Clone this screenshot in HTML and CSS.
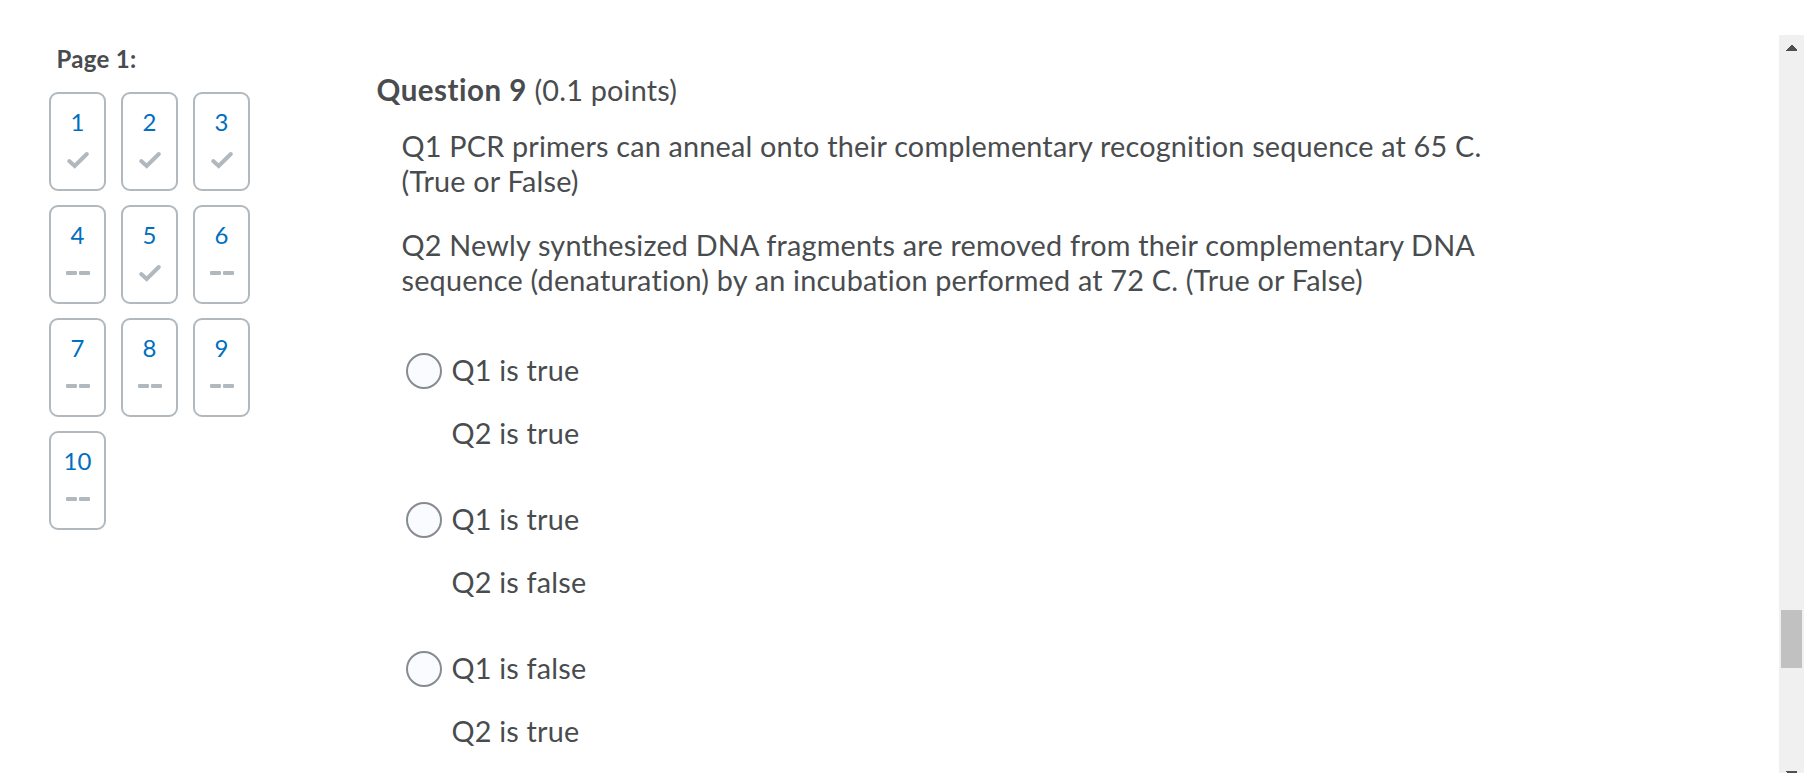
FILE: index.html
```
<!DOCTYPE html>
<html lang="en">
<head>
  <meta charset="UTF-8">
  <meta name="viewport" content="width=device-width, initial-scale=1.0">
  <title>Quiz - Question 9</title>
  <link rel="stylesheet" href="styles.css">
</head>
<body>
  <svg class="defs" width="0" height="0">
    <symbol id="check" viewBox="0 0 24 18">
      <path d="M3.2 10 L8.7 15 L20.8 3" fill="none" stroke="currentColor" stroke-width="4" stroke-linecap="round" stroke-linejoin="miter"/>
    </symbol>
    <symbol id="dashes" viewBox="0 0 24 18">
      <rect x="0" y="7" width="11" height="4" rx="1"/>
      <rect x="13" y="7" width="11" height="4" rx="1"/>
    </symbol>
  </svg>

  <div class="quiz">
    <nav class="sidebar">
      <h2 class="page-title">Page 1:</h2>
      <div class="question-grid">
        <a class="card"><span>1</span><svg class="icon"><use href="#check"/></svg></a>
        <a class="card"><span>2</span><svg class="icon"><use href="#check"/></svg></a>
        <a class="card"><span>3</span><svg class="icon"><use href="#check"/></svg></a>
        <a class="card"><span>4</span><svg class="icon"><use href="#dashes"/></svg></a>
        <a class="card"><span>5</span><svg class="icon"><use href="#check"/></svg></a>
        <a class="card"><span>6</span><svg class="icon"><use href="#dashes"/></svg></a>
        <a class="card"><span>7</span><svg class="icon"><use href="#dashes"/></svg></a>
        <a class="card"><span>8</span><svg class="icon"><use href="#dashes"/></svg></a>
        <a class="card"><span>9</span><svg class="icon"><use href="#dashes"/></svg></a>
        <a class="card"><span>10</span><svg class="icon"><use href="#dashes"/></svg></a>
      </div>
    </nav>

    <main class="content">
      <h1 class="question-title"><strong>Question 9</strong> (0.1 points)</h1>
      <div class="question-text">
        <p>Q1 PCR primers can anneal onto their complementary recognition sequence at 65 C.<br>(True or False)</p>
        <p>Q2 Newly synthesized DNA fragments are removed from their complementary DNA<br>sequence (denaturation) by an incubation performed at 72 C. (True or False)</p>
      </div>

      <div class="options">
        <label class="option">
          <input type="radio" name="answer" class="radio">
          <span class="answer"><span>Q1 is true</span><span>Q2 is true</span></span>
        </label>
        <label class="option">
          <input type="radio" name="answer" class="radio">
          <span class="answer"><span>Q1 is true</span><span>Q2 is false</span></span>
        </label>
        <label class="option">
          <input type="radio" name="answer" class="radio">
          <span class="answer"><span>Q1 is false</span><span>Q2 is true</span></span>
        </label>
      </div>
    </main>

    <div class="scrollbar">
      <svg class="arrow" viewBox="0 0 11 6" shape-rendering="crispEdges"><path d="M0 6V5L5 0H6L11 5V6Z"/></svg>
      <div class="thumb"></div>
      <svg class="arrow" viewBox="0 0 11 6" shape-rendering="crispEdges"><path d="M0 0V1L5 6H6L11 1V0Z"/></svg>
    </div>
  </div>
</body>
</html>
```
FILE: styles.css
```
* {
  box-sizing: border-box;
}
body {
  margin: 0;
  height: 773px;
  overflow: hidden;
  font-family: Lato, sans-serif;
  font-size: 28.8px;
  line-height: 35px;
  letter-spacing: 0.2px;
  color: #494c4e;
  background-color: #fff;
}
.defs {
  display: block;
}
.quiz {
  display: flex;
  height: 773px;
  overflow: hidden;
}

/* question navigation */
.sidebar {
  width: 376.5px;
  flex-shrink: 0;
  padding: 43px 0 0 49px;
}
.page-title {
  margin: 0 0 17px 7.5px;
  font-size: 24px;
  line-height: 32px;
  letter-spacing: 0.3px;
}
.question-grid {
  display: grid;
  grid-template-columns: repeat(3, 57px);
  gap: 14px 15px;
}
.card {
  display: flex;
  flex-direction: column;
  align-items: center;
  height: 99px;
  padding-top: 11px;
  border: 2px solid #b1b9be;
  border-radius: 9px;
  font-size: 24px;
  line-height: 34px;
  color: #006fbf;
}
.icon {
  width: 24px;
  height: 18px;
  margin-top: 12px;
  color: #b1b9be;
  fill: #b1b9be;
}

/* question */
.content {
  flex: 1;
  padding-top: 73px;
}
.question-title {
  margin: 0;
  font-size: 28.8px;
  font-weight: normal;
}
.question-title strong {
  font-size: 29.5px;
  line-height: 1;
  letter-spacing: 0.5px;
}
.question-text {
  padding: 21px 0 0 25px;
}
.question-text p {
  margin: 0 0 29px;
}
.options {
  padding: 26px 0 0 29.5px;
}
.option {
  display: flex;
  margin-bottom: 51px;
}
.radio {
  appearance: none;
  flex-shrink: 0;
  width: 36px;
  height: 36px;
  margin: 0 9.5px 0 0;
  border: 2px solid #868c8f;
  border-radius: 50%;
  background-color: #f9fbff;
}
.answer {
  display: flex;
  flex-direction: column;
  gap: 28px;
}

/* scrollbar */
.scrollbar {
  display: flex;
  flex-direction: column;
  align-items: center;
  flex-shrink: 0;
  width: 25px;
  height: 752px;
  margin: 35px 3px 0 0;
  padding-top: 10px;
  background-color: #f0f0f0;
}
.arrow {
  width: 11px;
  height: 6px;
  flex-shrink: 0;
  fill: #505050;
}
.thumb {
  width: 21px;
  height: 58px;
  flex-shrink: 0;
  margin: 559px 0 103px;
  background-color: #c1c1c1;
}
```
